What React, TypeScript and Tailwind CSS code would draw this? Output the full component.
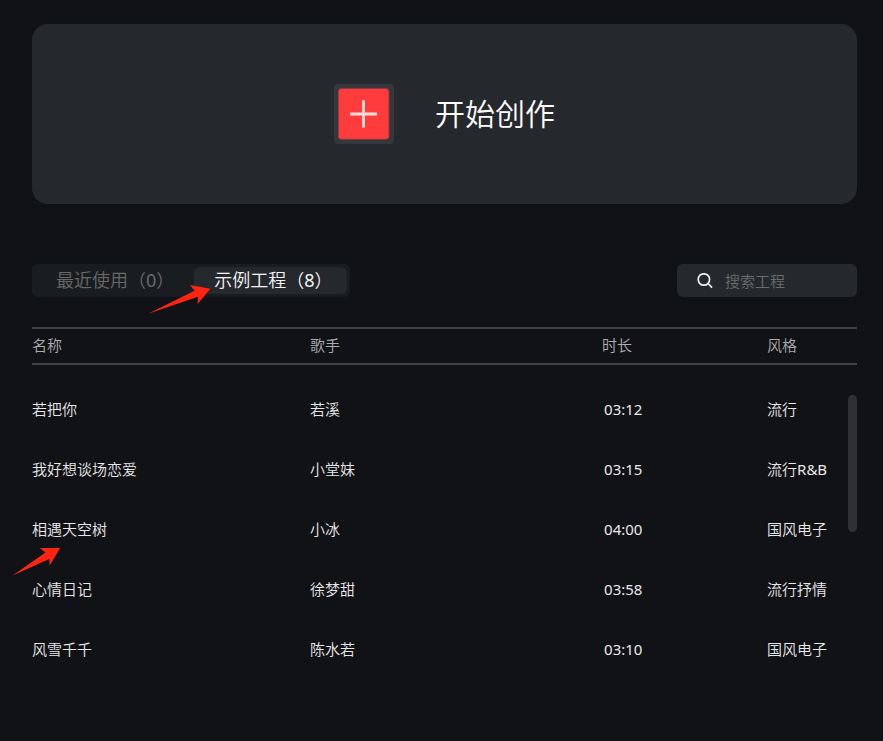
/**
 * ProjectHome — start page with the "new project" card and the project list.
 */

import { useState } from "react";

interface Project {
    name: string;
    singer: string;
    duration: string;
    style: string;
}

const SAMPLE_PROJECTS: Project[] = [
    { name: "若把你", singer: "若溪", duration: "03:12", style: "流行" },
    { name: "我好想谈场恋爱", singer: "小堂妹", duration: "03:15", style: "流行R&B" },
    { name: "相遇天空树", singer: "小冰", duration: "04:00", style: "国风电子" },
    { name: "心情日记", singer: "徐梦甜", duration: "03:58", style: "流行抒情" },
    { name: "风雪千千", singer: "陈水若", duration: "03:10", style: "国风电子" },
];

const COLUMNS = [
    { label: "名称", width: "w-[33.7%]" },
    { label: "歌手", width: "w-[35.4%]" },
    { label: "时长", width: "w-[20%]" },
    { label: "风格", width: "w-[10.9%]" },
];

function StartCard() {
    return (
        <button
            type="button"
            className="flex h-[180px] w-full items-center justify-center gap-[41px] rounded-2xl bg-[#25282c]"
        >
            <span className="flex size-[60px] items-center justify-center rounded-sm bg-[#34373c]">
                <svg viewBox="0 0 52 52" className="size-[52px]" aria-hidden="true">
                    <rect x="0.2" y="0.5" width="50.8" height="50.8" rx="3" fill="#ff3b3b" stroke="#7d3f43" />
                    <path d="M25.5 12.3v27.2M12 26h27" stroke="#ffdcdc" strokeWidth="2.8" />
                </svg>
            </span>
            <span className="text-[30px] leading-10 text-white">开始创作</span>
        </button>
    );
}

function SearchBox() {
    return (
        <label className="flex h-[33px] w-[180px] items-center gap-3 rounded-md bg-[#25282c] pl-5">
            <svg viewBox="0 0 16 16" className="size-4 shrink-0" fill="none" stroke="#f0f0f0" strokeWidth="1.7" aria-hidden="true">
                <circle cx="6.9" cy="6.5" r="5.7" />
                <path d="M11 10.5l4.1 4.1" />
            </svg>
            <input
                type="text"
                aria-label="搜索工程"
                placeholder="搜索工程"
                className="w-full min-w-0 bg-transparent text-[15px] leading-5 text-[#e0e0e0] outline-none placeholder:text-[#6b6d70]"
            />
        </label>
    );
}

function ProjectTable({ projects }: { projects: Project[] }) {
    return (
        <div className="relative">
            <table className="w-full table-fixed border-separate border-spacing-0 text-left text-[15px] leading-5">
                <thead>
                    <tr>
                        {COLUMNS.map((c) => (
                            <th
                                key={c.label}
                                className={`h-[38px] border-y-2 border-[#414245] p-0 pb-0.5 font-normal text-[#adaeaf] ${c.width}`}
                            >
                                {c.label}
                            </th>
                        ))}
                    </tr>
                </thead>
                <tbody className="text-[#e8e8e8] before:block before:h-3.5 before:content-['']">
                    {projects.map((p) => (
                        <tr key={p.name} className="h-[60px] whitespace-nowrap">
                            <td className="p-0">{p.name}</td>
                            <td className="p-0">{p.singer}</td>
                            <td className="p-0 pl-0.5">{p.duration}</td>
                            <td className="p-0">{p.style}</td>
                        </tr>
                    ))}
                </tbody>
            </table>

            {/* Scroll thumb */}
            <div className="absolute top-17 right-0 h-[137px] w-[9px] rounded-full bg-[#2f3034]" />
        </div>
    );
}

export default function App() {
    const [tab, setTab] = useState<"recent" | "sample">("sample");

    return (
        <main className="relative min-h-screen bg-[#111216] pt-6 pr-[26px] pb-8 pl-8 font-['Noto_Sans','Noto_Sans_CJK_SC_DemiLight','Noto_Sans_CJK_SC',sans-serif]">
            <StartCard />

            <div className="mt-[60px] mb-[30px] flex items-center justify-between">
                <div className="flex h-[33px] items-center rounded-md bg-[#1a1d20] pr-[3px] text-lg leading-[27px]">
                    <button
                        type="button"
                        onClick={() => setTab("recent")}
                        className={`h-[27px] rounded-md pr-5 pl-6 ${tab === "recent" ? "bg-[#25282c] text-[#f4f4f4]" : "text-[#68696b]"}`}
                    >
                        最近使用（0）
                    </button>
                    <button
                        type="button"
                        onClick={() => setTab("sample")}
                        className={`h-[27px] rounded-md pr-3.5 pl-5 ${tab === "sample" ? "bg-[#25282c] text-[#f4f4f4]" : "text-[#68696b]"}`}
                    >
                        示例工程（8）
                    </button>
                </div>
                <SearchBox />
            </div>

            <ProjectTable projects={tab === "sample" ? SAMPLE_PROJECTS : []} />

            {/* Guide arrows: sample tab, then the third project */}
            <svg viewBox="0 0 63 30" className="pointer-events-none absolute top-[284px] left-[148px] h-[30px] w-[63px]" aria-hidden="true">
                <path d="M0 29.7L46.5 6.7L42 1L62.3 4.7L49.7 20L50 12.7Z" fill="#ff2412" />
            </svg>
            <svg viewBox="0 0 49 29" className="pointer-events-none absolute top-[547px] left-[12px] h-[29px] w-[49px]" aria-hidden="true">
                <path d="M0.5 28.5L33.5 5.5L27.7 1L48.2 1L37.7 18.5L37.3 12Z" fill="#ff2412" />
            </svg>
        </main>
    );
}
